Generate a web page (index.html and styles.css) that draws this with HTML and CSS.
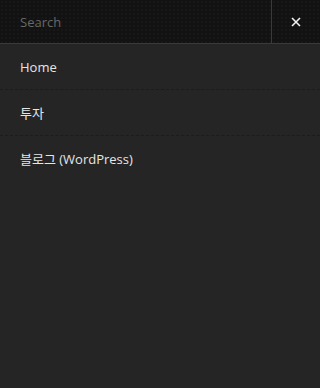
FILE: index.html
```html
<!DOCTYPE html>
<html lang="ko">
<head>
<meta charset="utf-8">
<link rel="stylesheet" href="styles.css">
</head>
<body>
<div class="panel">
  <div class="searchbar">
    <div class="search-field">Search</div>
    <button class="close" aria-label="Close">
      <svg width="10" height="10" viewBox="0 0 10 10"><path d="M1 1L9 9M9 1L1 9" stroke="#f2f2f2" stroke-width="1.6" fill="none"/></svg>
    </button>
  </div>
  <ul class="menu">
    <li class="item">Home</li>
    <li class="item">투자</li>
    <li class="item">블로그 (WordPress)</li>
  </ul>
</div>
</body>
</html>
```
FILE: styles.css
```css
html, body {
  margin: 0;
  padding: 0;
  height: 100%;
}
body {
  background: #252525;
  font-family: "Open Sans", "Noto Sans", "Noto Sans CJK KR", sans-serif;
  font-size: 13px;
}
.panel {
  display: flex;
  flex-direction: column;
  height: 100%;
}
.searchbar {
  display: flex;
  height: 43px;
  background-color: #121212;
  background-image: radial-gradient(circle, #1b1b1b 0.6px, transparent 0.9px);
  background-size: 4px 4px;
  border-bottom: 1px solid #3a3a3a;
}
.search-field {
  flex: 1;
  display: flex;
  align-items: center;
  padding-left: 20px;
  color: #676767;
  font-size: 13px;
  border-right: 1px solid #3a3a3a;
}
.close {
  width: 48px;
  border: 0;
  padding: 0;
  background: transparent;
  display: flex;
  align-items: center;
  justify-content: center;
}
.menu {
  list-style: none;
  margin: 0;
  padding: 0;
}
.item {
  height: 45px;
  display: flex;
  align-items: center;
  padding-left: 20px;
  color: #e6e6e6;
  border-bottom: 1px dashed #1c1c1c;
}
.item:last-child {
  border-bottom: 0;
}
```
